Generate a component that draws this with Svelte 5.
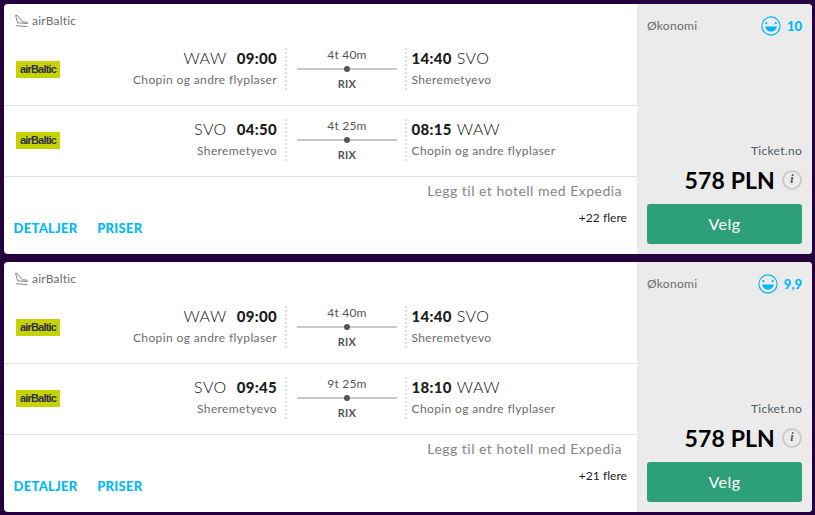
<script lang="ts">
	interface Leg {
		from: string;
		fromName: string;
		departs: string;
		duration: string;
		via: string;
		arrives: string;
		to: string;
		toName: string;
	}

	interface Trip {
		airline: string;
		legs: Leg[];
		more: string;
		cabin: string;
		score: string;
		seller: string;
		price: string;
	}

	const warsaw = 'Chopin og andre flyplaser';
	const moscow = 'Sheremetyevo';

	const outbound: Leg = {
		from: 'WAW',
		fromName: warsaw,
		departs: '09:00',
		duration: '4t 40m',
		via: 'RIX',
		arrives: '14:40',
		to: 'SVO',
		toName: moscow
	};

	function homebound(departs: string, duration: string, arrives: string): Leg {
		return { from: 'SVO', fromName: moscow, departs, duration, via: 'RIX', arrives, to: 'WAW', toName: warsaw };
	}

	const trips: Trip[] = [
		{
			airline: 'airBaltic',
			legs: [outbound, homebound('04:50', '4t 25m', '08:15')],
			more: '+22 flere',
			cabin: 'Økonomi',
			score: '10',
			seller: 'Ticket.no',
			price: '578 PLN'
		},
		{
			airline: 'airBaltic',
			legs: [outbound, homebound('09:45', '9t 25m', '18:10')],
			more: '+21 flere',
			cabin: 'Økonomi',
			score: '9,9',
			seller: 'Ticket.no',
			price: '578 PLN'
		}
	];
</script>

<main class="results">
	{#each trips as trip}
		<article class="card">
			<section class="trip">
				<header class="airline">
					<svg class="plane" width="14" height="14" viewBox="0 0 14 14" aria-hidden="true">
						<path d="M2.6 8.8 .6 1.3 2.4 1.5 7.4 7.8 11.4 8.1Q12.8 8.5 12.4 9.5ZM1.2 11.7 12.4 12.6" />
					</svg>
					<span class="airline-name">{trip.airline}</span>
				</header>

				{#each trip.legs as leg}
					<div class="leg">
						<div class="logo"><span>{trip.airline}</span></div>
						<div class="stop stop--from">
							<div class="place"><span class="code">{leg.from}</span><b class="time">{leg.departs}</b></div>
							<div class="airport">{leg.fromName}</div>
						</div>
						<i class="dots"></i>
						<div class="route">
							<div class="duration">{leg.duration}</div>
							<div class="line"><i></i></div>
							<div class="via">{leg.via}</div>
						</div>
						<i class="dots"></i>
						<div class="stop stop--to">
							<div class="place"><b class="time">{leg.arrives}</b><span class="code">{leg.to}</span></div>
							<div class="airport">{leg.toName}</div>
						</div>
					</div>
				{/each}

				<footer class="footer">
					<nav class="links">
						<a href="#details">DETALJER</a>
						<a href="#prices">PRISER</a>
					</nav>
					<div class="extras">
						<div class="hotel">Legg til et hotell med Expedia</div>
						<div class="more">{trip.more}</div>
					</div>
				</footer>
			</section>

			<aside class="offer">
				<div class="rating">
					<span class="cabin">{trip.cabin}</span>
					<svg class="smiley" width="20" height="20" viewBox="0 0 20 20" aria-hidden="true">
						<circle cx="10" cy="10" r="9.1" />
						<path d="M4.2 10.6H15.8Q15 15.7 10 15.7T4.2 10.6Z" />
						<circle cx="5.3" cy="7.2" r="1.1" />
						<circle cx="14.7" cy="7.2" r="1.1" />
					</svg>
					<b class="score">{trip.score}</b>
				</div>
				<div class="seller">{trip.seller}</div>
				<div class="price-row">
					<b class="price">{trip.price}</b>
					<span class="info">i</span>
				</div>
				<button class="select" type="button">Velg</button>
			</aside>
		</article>
	{/each}
</main>

<style>
	:global(body) {
		margin: 0;
		background: #24003f;
	}

	.results {
		box-sizing: border-box;
		height: 515px;
		padding: 4px 3px 3px 4px;
		display: flex;
		flex-direction: column;
		gap: 8px;
		overflow: hidden;
		font-family: Lato, 'Liberation Sans', sans-serif;
		color: #1c1c1c;
		white-space: nowrap;
	}

	.card {
		display: flex;
		height: 250px;
		border-radius: 4px;
		overflow: hidden;
		background: #fff;
	}

	.trip {
		width: 633px;
	}

	.airline {
		display: flex;
		align-items: center;
		box-sizing: border-box;
		height: 31px;
		padding: 3px 0 0 11px;
		gap: 3px;
	}

	.plane {
		fill: none;
		stroke: #777;
		stroke-width: 0.9;
	}

	.airline-name {
		font-size: 12px;
		line-height: 16px;
		letter-spacing: 0.2px;
		color: #6c6c6c;
	}

	.leg {
		display: grid;
		grid-template-columns: 56px 225px 2px 118px 2px 1fr;
		align-items: start;
		box-sizing: border-box;
		height: 71px;
		padding-top: 13px;
		border-bottom: 1px solid #e0e0e0;
	}

	.logo {
		display: flex;
		align-items: center;
		justify-content: center;
		width: 44px;
		height: 17px;
		margin: 13px 0 0 12px;
		background: #c6d300;
	}

	.logo span {
		font: bold 11px/17px 'Liberation Sans', sans-serif;
		letter-spacing: -0.8px;
		color: #30304c;
	}

	.stop--from {
		padding-right: 8px;
		text-align: right;
	}

	.stop--to {
		padding-left: 4.5px;
	}

	.place {
		display: flex;
		height: 20px;
		line-height: 20px;
		font-size: 15px;
	}

	.stop--from .place {
		justify-content: flex-end;
		gap: 10px;
	}

	.stop--to .place {
		gap: 5px;
	}

	.code {
		color: #111;
		font-size: 16px;
		font-weight: 300;
		letter-spacing: 0.5px;
	}

	.time {
		font-weight: 900;
		letter-spacing: 0.3px;
	}

	.airport {
		margin-top: 4px;
		font-size: 12px;
		line-height: 16px;
		letter-spacing: 0.38px;
		color: #6c6c6c;
	}

	.dots {
		width: 2px;
		height: 42px;
		background: repeating-linear-gradient(#dcdcdc 0 2px, transparent 2px 4px);
	}

	.route {
		width: 100px;
		margin-left: 10px;
		text-align: center;
	}

	.duration {
		height: 20px;
		line-height: 14px;
		font-size: 12px;
		letter-spacing: 0.2px;
		color: #555;
	}

	.line {
		display: flex;
		align-items: center;
		justify-content: center;
		height: 2px;
		background: #c9c9c9;
	}

	.line i {
		flex: none;
		width: 6px;
		height: 6px;
		border-radius: 50%;
		background: #555;
	}

	.via {
		margin-top: 7px;
		font-size: 11px;
		line-height: 14px;
		font-weight: bold;
		letter-spacing: 0.2px;
		color: #555;
	}

	.footer {
		display: flex;
		justify-content: space-between;
	}

	.links {
		display: flex;
		gap: 19.5px;
		padding: 42px 0 0 9.5px;
		font-size: 13px;
		line-height: 18px;
		font-weight: 900;
		letter-spacing: 0.3px;
	}

	.links a {
		color: #00b8f8;
		text-decoration: none;
	}

	.extras {
		padding-right: 10px;
		text-align: right;
	}

	.hotel {
		margin: 5px 5px 0 0;
		font-size: 14px;
		line-height: 18px;
		letter-spacing: 0.48px;
		color: #858585;
	}

	.more {
		margin-top: 10px;
		font-size: 12px;
		line-height: 16px;
		letter-spacing: 0.05px;
		color: #222;
	}

	.offer {
		flex: 1;
		box-sizing: border-box;
		padding: 12px 10px 10px;
		background: #ebebeb;
	}

	.rating {
		display: flex;
		align-items: center;
		height: 20px;
	}

	.cabin {
		flex: 1;
		font-size: 12px;
		line-height: 16px;
		letter-spacing: 0.3px;
		color: #6c6c6c;
	}

	.smiley {
		margin-right: 6px;
		fill: #00b8f8;
	}

	.smiley circle:first-child {
		fill: none;
		stroke: #00b8f8;
		stroke-width: 1.2;
	}

	.score {
		font-size: 13px;
		font-weight: 900;
		line-height: 18px;
		color: #00b8f8;
	}

	.seller {
		margin-top: 107px;
		font-size: 12px;
		line-height: 16px;
		letter-spacing: 0.3px;
		text-align: right;
		color: #4f5b66;
	}

	.price-row {
		display: flex;
		align-items: center;
		justify-content: flex-end;
		gap: 7px;
		height: 24px;
		margin-top: 9px;
	}

	.price {
		font-size: 23px;
		letter-spacing: 0.15px;
		color: #000;
	}

	.info {
		box-sizing: border-box;
		width: 20px;
		height: 20px;
		border: 2px solid #cbcbcb;
		border-radius: 50%;
		font: italic bold 12px/15px 'Liberation Serif', serif;
		text-align: center;
		color: #555;
	}

	.select {
		display: block;
		width: 155px;
		height: 40px;
		margin-top: 12px;
		padding: 0;
		border: 0;
		border-radius: 3px;
		background: #2da079;
		font: 16px/40px Lato, sans-serif;
		letter-spacing: 0.5px;
		color: #fff;
	}
</style>
